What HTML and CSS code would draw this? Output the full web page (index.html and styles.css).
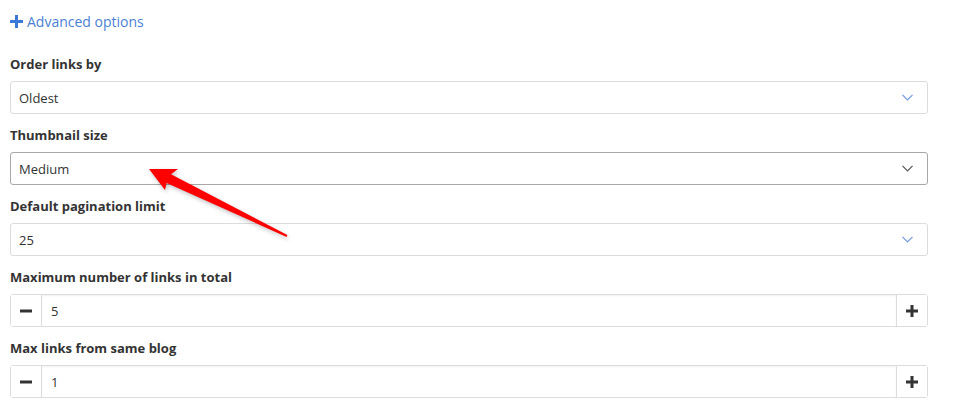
FILE: index.html
```html
<!DOCTYPE html>
<html lang="en">
<head>
    <meta charset="UTF-8">
    <title>Advanced options</title>
    <link rel="stylesheet" href="styles.css">
</head>
<body>
    <div class="settings">
        <!-- Toggle link -->
        <a class="advanced-link" href="#">
            <svg class="plus-icon" width="13" height="13" viewBox="0 0 13 13"><path d="M6.5 0v13M0 6.5h13" stroke="#3b78d8" stroke-width="3"/></svg>
            Advanced options
        </a>

        <div class="field">
            <label>Order links by</label>
            <div class="select">
                <span>Oldest</span>
                <svg class="chevron" width="11" height="7" viewBox="0 0 11 7"><path d="M0.5 0.8l5 5 5-5" fill="none" stroke="#6f98e0" stroke-width="1.2"/></svg>
            </div>
        </div>

        <div class="field">
            <label>Thumbnail size</label>
            <div class="select active">
                <span>Medium</span>
                <svg class="chevron" width="11" height="7" viewBox="0 0 11 7"><path d="M0.5 0.8l5 5 5-5" fill="none" stroke="#555" stroke-width="1.2"/></svg>
            </div>
        </div>

        <div class="field">
            <label>Default pagination limit</label>
            <div class="select">
                <span>25</span>
                <svg class="chevron" width="11" height="7" viewBox="0 0 11 7"><path d="M0.5 0.8l5 5 5-5" fill="none" stroke="#6f98e0" stroke-width="1.2"/></svg>
            </div>
        </div>

        <div class="field">
            <label>Maximum number of links in total</label>
            <div class="stepper">
                <button class="step-btn"><svg width="12" height="12" viewBox="0 0 12 12"><path d="M0 6h12" stroke="#333" stroke-width="3"/></svg></button>
                <div class="step-value">5</div>
                <button class="step-btn"><svg width="12" height="12" viewBox="0 0 12 12"><path d="M6 0v12M0 6h12" stroke="#333" stroke-width="3"/></svg></button>
            </div>
        </div>

        <div class="field">
            <label>Max links from same blog</label>
            <div class="stepper">
                <button class="step-btn"><svg width="12" height="12" viewBox="0 0 12 12"><path d="M0 6h12" stroke="#333" stroke-width="3"/></svg></button>
                <div class="step-value">1</div>
                <button class="step-btn"><svg width="12" height="12" viewBox="0 0 12 12"><path d="M6 0v12M0 6h12" stroke="#333" stroke-width="3"/></svg></button>
            </div>
        </div>
    </div>

    <!-- Red annotation arrow -->
    <svg class="arrow" width="953" height="413" viewBox="0 0 953 413">
        <path d="M149 169 L178 169 L171 174.2 L287.4 235.1 L286.6 236.9 L166.6 183.1 L165 190 Z" fill="#ff0000"/>
    </svg>
</body>
</html>
```

FILE: styles.css
```css
/* General settings */
body {
    margin: 0;
    padding: 0;
    background-color: #fff;
    font-family: "Open Sans", "Noto Sans", sans-serif;
    color: #333;
    position: relative;
}

.settings {
    width: 918px;
    padding: 10px 10px 0 10px;
}

/* Advanced options link */
.advanced-link {
    display: flex;
    align-items: center;
    gap: 4px;
    color: #4a7fd4;
    text-decoration: none;
    font-size: 14px;
    height: 22px;
    margin-bottom: 23px;
}

.field {
    margin-bottom: 12px;
}

.field label {
    display: block;
    font-size: 13px;
    font-weight: 700;
    color: #333;
    line-height: 18px;
    margin-bottom: 8px;
}

/* Select boxes */
.select {
    height: 33px;
    box-sizing: border-box;
    border: 1px solid #dcdcdc;
    border-radius: 3px;
    display: flex;
    align-items: center;
    justify-content: space-between;
    padding: 0 14px 0 8px;
    font-size: 13px;
}

.select.active {
    border-color: #a8a8a8;
}

/* Number steppers */
.stepper {
    height: 33px;
    box-sizing: border-box;
    border: 1px solid #dcdcdc;
    border-radius: 3px;
    display: flex;
}

.step-btn {
    width: 31px;
    border: none;
    background: #fff;
    padding: 0;
    display: flex;
    align-items: center;
    justify-content: center;
}

.step-btn:first-child {
    border-right: 1px solid #dcdcdc;
}

.step-btn:last-child {
    border-left: 1px solid #dcdcdc;
}

.step-value {
    flex: 1;
    display: flex;
    align-items: center;
    padding-left: 9px;
    font-size: 13px;
    box-shadow: inset 0 1px 2px rgba(0, 0, 0, 0.06);
}

/* Annotation arrow */
.arrow {
    position: absolute;
    left: 0;
    top: 0;
    pointer-events: none;
    filter: drop-shadow(1px 2px 2px rgba(0, 0, 0, 0.25));
}
```
